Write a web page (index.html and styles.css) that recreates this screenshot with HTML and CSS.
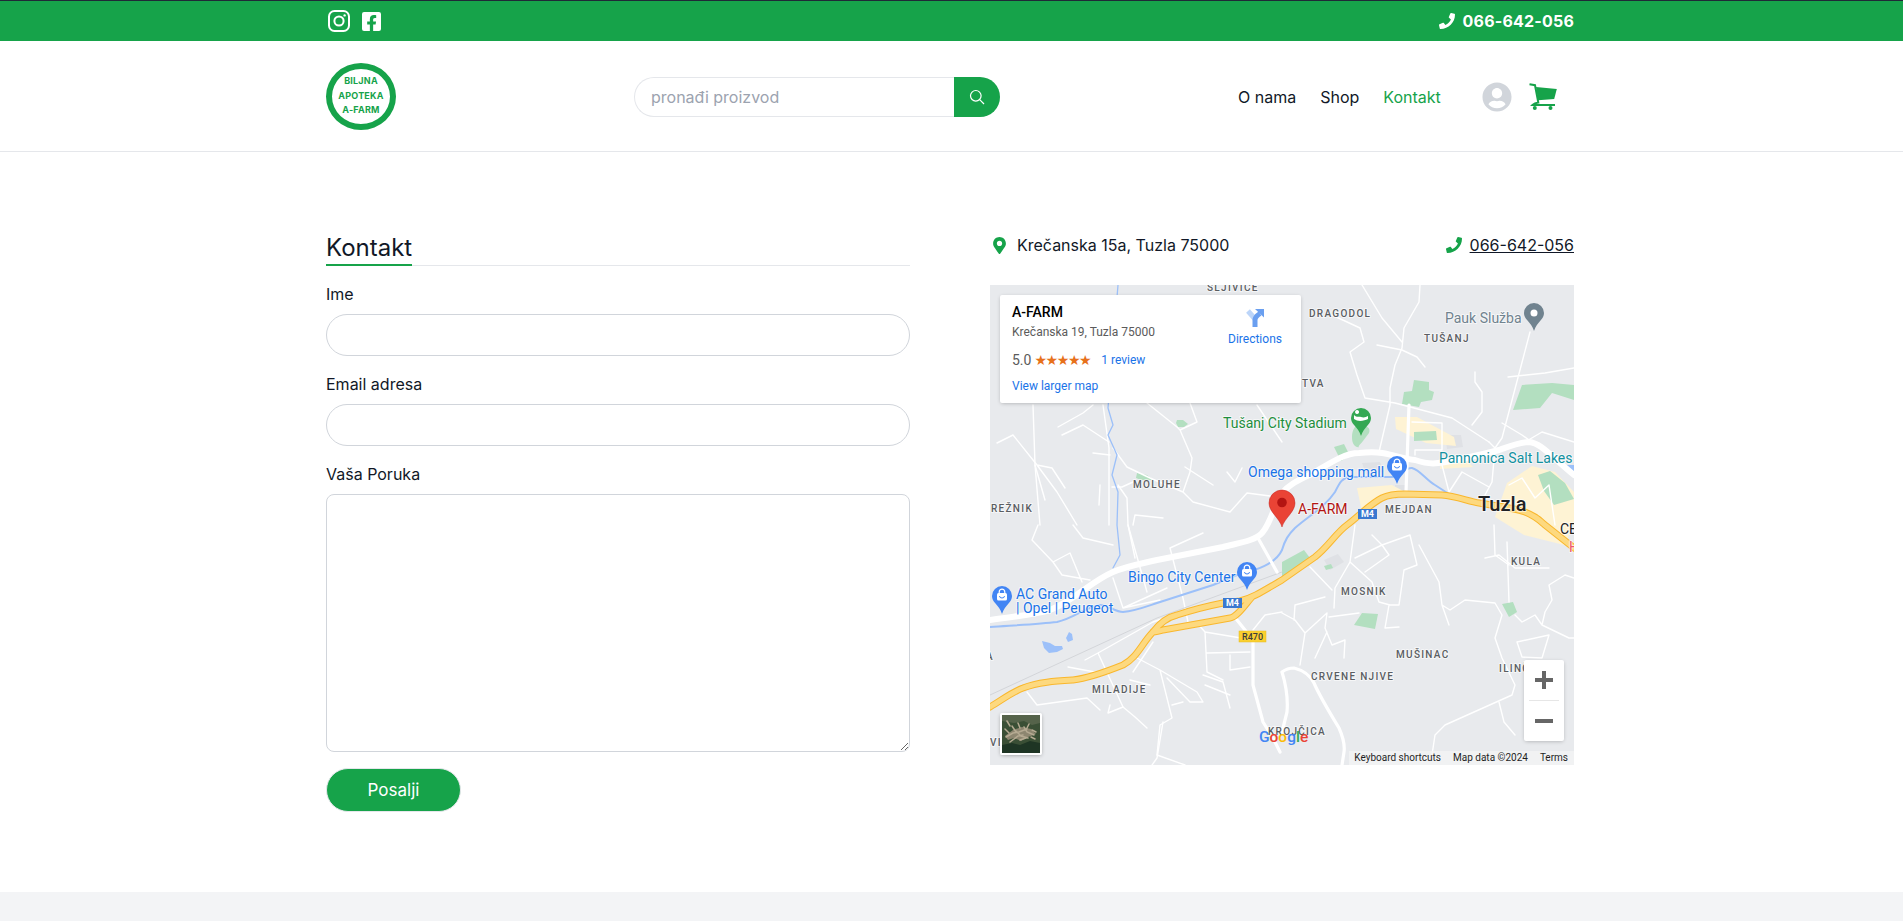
FILE: index.html
```html
<!DOCTYPE html>
<html lang="bs">

<head>
    <meta charset="UTF-8">
    <title>Kontakt - A-FARM</title>
    <link rel="stylesheet" href="styles.css">
</head>

<body>
    <!-- Gornja traka -->
    <div class="topbar">
        <div class="container topbar-inner">
            <div class="social">
                <a href="#" aria-label="Instagram">
                    <svg class="icon-instagram" viewBox="0 0 22 22" fill="none" stroke="#fff" stroke-width="2">
                        <rect x="1" y="1" width="20" height="20" rx="5.5"/>
                        <circle cx="11" cy="11" r="4.6"/>
                        <circle cx="16.6" cy="5.4" r="1.2" fill="#fff" stroke="none"/>
                    </svg>
                </a>
                <a href="#" aria-label="Facebook">
                    <svg class="icon-facebook" viewBox="0 32 448 448" fill="#fff">
                        <path d="M400 32H48A48 48 0 0 0 0 80v352a48 48 0 0 0 48 48h137.25V327.69h-63V256h63v-54.64c0-62.15 37-96.48 93.67-96.48 27.14 0 55.52 4.84 55.52 4.84v61h-31.27c-30.81 0-40.42 19.12-40.42 38.73V256h68.78l-11 71.69h-57.78V480H400a48 48 0 0 0 48-48V80a48 48 0 0 0-48-48z"/>
                    </svg>
                </a>
            </div>
            <a href="#" class="topbar-phone">
                <svg class="icon-phone" viewBox="0 0 512 512" fill="#fff">
                    <path d="M493.4 24.6l-104-24c-11.3-2.6-22.9 3.3-27.5 13.9l-48 112c-4.2 9.8-1.4 21.3 6.9 28l60.6 49.6c-36 76.7-98.9 140.5-177.2 177.2l-49.6-60.6c-6.8-8.3-18.2-11.1-28-6.9l-112 48C3.9 366.5-2 378.1.6 389.4l24 104C27.1 504.2 36.7 512 48 512c256.1 0 464-207.5 464-464 0-11.2-7.7-20.9-18.6-23.4z"/>
                </svg>
                066-642-056
            </a>
        </div>
    </div>

    <!-- Zaglavlje -->
    <header class="site-header">
        <div class="container header-inner">
            <a href="#" class="logo">
                <span>BILJNA</span>
                <span>APOTEKA</span>
                <span>A-FARM</span>
            </a>

            <form class="search">
                <input type="text" class="search-input" placeholder="pronađi proizvod">
                <button type="button" class="search-btn" aria-label="Pretraga">
                    <svg viewBox="0 0 16 16" fill="none" stroke="#fff" stroke-width="1.2">
                        <circle cx="6.8" cy="6.8" r="5.3"/>
                        <path d="M10.7 10.7L15 15"/>
                    </svg>
                </button>
            </form>

            <div class="header-right">
                <nav class="main-nav">
                    <a href="#">O nama</a>
                    <a href="#">Shop</a>
                    <a href="#" class="active">Kontakt</a>
                </nav>
                <svg class="icon-user" viewBox="0 0 496 512" fill="#d1d5db">
                    <path d="M248 8C111 8 0 119 0 256s111 248 248 248 248-111 248-248S385 8 248 8zm0 96c48.6 0 88 39.4 88 88s-39.4 88-88 88-88-39.4-88-88 39.4-88 88-88zm0 344c-58.7 0-111.3-26.6-146.5-68.2 18.8-35.4 55.6-59.8 98.5-59.8 2.4 0 4.8.4 7.1 1.1 13 4.2 26.6 6.9 40.9 6.9 14.3 0 28-2.7 40.9-6.9 2.3-.7 4.7-1.1 7.1-1.1 42.9 0 79.7 24.4 98.5 59.8C359.3 421.4 306.7 448 248 448z"/>
                </svg>
                <svg class="icon-cart" viewBox="0 0 28 27">
                    <path class="cart-line" d="M0.500 1.200L6 2.200 9.300 19.500C6.500 19.800 5 20.500 3.500 22H26"/>
                    <path class="cart-body" d="M7 4L27.800 6 25.200 16 9 17.200z"/>
                    <circle class="cart-body" cx="5.800" cy="25" r="2"/>
                    <circle class="cart-body" cx="21.500" cy="25" r="2"/>
                </svg>
            </div>
        </div>
    </header>

    <main class="container contact">
        <!-- Forma -->
        <section>
            <div class="section-title"><h2>Kontakt</h2></div>
            <form class="contact-form">
                <label for="ime">Ime</label>
                <input type="text" id="ime">
                <label for="email">Email adresa</label>
                <input type="email" id="email">
                <label for="poruka">Vaša Poruka</label>
                <textarea id="poruka"></textarea>
                <button type="button" class="send-btn">Posalji</button>
            </form>
        </section>

        <!-- Adresa i mapa -->
        <section>
            <div class="contact-info">
                <div class="info-item">
                    <svg class="icon-pin" viewBox="0 0 384 512" fill="#16a34a">
                        <path d="M172.268 501.67C26.97 291.031 0 268.413 0 192 0 85.961 85.961 0 192 0s192 85.961 192 192c0 76.413-26.97 99.031-172.268 309.67-9.535 13.774-29.93 13.773-39.464 0zM192 272c44.183 0 80-35.817 80-80s-35.817-80-80-80-80 35.817-80 80 35.817 80 80 80z"/>
                    </svg>
                    Krečanska 15a, Tuzla 75000
                </div>
                <div class="info-item">
                    <svg class="icon-phone" viewBox="0 0 512 512" fill="#16a34a">
                        <path d="M493.4 24.6l-104-24c-11.3-2.6-22.9 3.3-27.5 13.9l-48 112c-4.2 9.8-1.4 21.3 6.9 28l60.6 49.6c-36 76.7-98.9 140.5-177.2 177.2l-49.6-60.6c-6.8-8.3-18.2-11.1-28-6.9l-112 48C3.9 366.5-2 378.1.6 389.4l24 104C27.1 504.2 36.7 512 48 512c256.1 0 464-207.5 464-464 0-11.2-7.7-20.9-18.6-23.4z"/>
                    </svg>
                    <a href="#" class="info-phone">066-642-056</a>
                </div>
            </div>

            <div class="map">
                <svg class="map-canvas" viewBox="0 0 584 480">
                    <defs>
                        <path id="poi" d="M0 28c-1.5-5-4-7.500-6.500-10.500C-8.700 15-10 13-10 10a10 10 0 0 1 20 0c0 3-1.300 5-3.500 7.500C4 20.500 1.500 23 0 28z"/>
                        <g id="bag">
                            <rect x="-5" y="7" width="10" height="7.500" rx="1.500" fill="#fff"/>
                            <path d="M-2.800 7.500V6a2.800 2.800 0 0 1 5.600 0v1.500" fill="none" stroke="#fff" stroke-width="1.200"/>
                            <path d="M-2.500 10a2.500 2 0 0 0 5 0" fill="none" stroke="#4285f4" stroke-width="1"/>
                        </g>
                    </defs>

                    <!-- Povrsine -->
                    <g class="bldg">
                        <path d="M372 178l18-1 4 10-18 2z"/>
                        <path d="M405 200l12 0 0 12-12 2z"/>
                        <path d="M334 275l14-6 6 8-14 8z"/>
                        <path d="M455 150l16 0 2 12-16 2z"/>
                    </g>
                    <g class="beige">
                        <path d="M505 232l12-34 25-17 23 6 19 20v33l-10 20-40-10z"/>
                        <path d="M367 203l35-3 15 8-29 9-16 10z"/>
                        <path d="M405 132l22 0 37 20 2 9-30-3-30-14z"/>
                        <path d="M450 176l25-2 8 8-33 2z"/>
                    </g>
                    <g class="park">
                        <path d="M424 95l15 2 0 8 5 2-2 8-11 2-2 5-17-3 2-12 8-1z"/>
                        <path d="M532 100l30-2 22 2v15l-22-7-12 15-27 2z"/>
                        <path d="M187 135l6 0 5 4-4 3-6 0-2-4z"/>
                        <path d="M147 188l10 2 6 5-12 0-5-2z"/>
                        <path d="M369 140c8 0 12 3 10 8l-6 8c-4 5-6 6-3 6-6 1-8-4-8-10 0-5 2-12 7-12z"/>
                        <path d="M344 162l10-3 6 12-9 5z"/>
                        <path d="M424 147l22-1 1 9-23 1z"/>
                        <path d="M292 277l22-12 6 8-28 19z"/>
                        <path d="M364 340l8-12 16 1-3 15z"/>
                        <path d="M512 319l11-2 4 10-8 5z"/>
                        <path d="M334 281l7-2 2 4-7 2z"/>
                        <path d="M548 190l12-4 15 12 9 16-20 6-10-14z"/>
                    </g>
                    <path class="lake" d="M576 180l8 0 0 10-4-2z"/>

                    <!-- Sporedne ulice -->
                    <g class="road">
                        <path d="M7 158L23 150 47 180 67 207 87 240M47 180L62 183 75 203M113 120L119 163V240M128 200L137 213 138 240 145 273"/>
                        <path d="M123 163L137 182 160 193 193 207 203 217 240 227 257 208 280 211M190 145L202 173 200 187 193 207M157 118L187 142 190 145 207 137 200 118"/>
                        <path d="M68 142L93 128 103 120M72 150L93 140 119 157M43 120L45 180 50 240M237 187L245 197 252 183M195 182L223 200M122 202H132L143 197M143 240L145 230 173 233M110 200L109 220M103 168L120 170M267 120L292 157"/>
                        <path d="M430 0L429 17 414 43 412 63 405 80 400 103V120L389 167M342 30L370 43 374 57 360 67 367 90 375 113 405 118 462 133 499 157M372 0L392 33 412 57M387 60L412 65 427 72 435 82"/>
                        <path d="M540 47L512 153 505 163M485 87V97L492 107V127L482 140M518 92L555 88 584 83M535 157L552 147 584 157M499 157L505 163 502 197 495 210"/>
                        <path d="M422 137L452 138V165L425 165V170M452 180L459 207 472 187M472 187L499 202M519 200L532 193 545 213 559 200 565 240M512 138L532 150 560 170"/>
                        <path d="M42 255L48 240M42 255L63 277 80 268 92 297M63 277L72 290 100 295M83 240L93 253 123 260M123 293L133 323 170 315M138 240L157 307M133 323L177 303M180 263L193 313 198 337M180 263L213 248"/>
                        <path d="M108 368L163 337 183 330M95 375L108 368 133 422 145 432 157 443M78 382L110 388M147 373L170 385 207 407 213 417H200L177 393M163 357L143 387M170 385L182 433 170 440 167 470"/>
                        <path d="M37 407L47 420 97 413 110 425M118 428L133 422M118 428L120 420M215 347L217 387 233 395M207 338L215 347 263 355M217 368L260 367M240 370V385L260 382M213 390L233 397 240 423"/>
                        <path d="M263 345L275 330 292 327M420 250L427 280 414 285 409 320H399L395 343 409 342M365 240L360 277 345 303 344 323M360 277L382 297 389 317 400 320M365 273L392 260 420 250M382 250L392 260 399 270 375 287M320 282L342 305"/>
                        <path d="M292 328L305 335 315 348 310 380M305 320L335 312M305 320L304 335M315 348L337 328 335 343 342 360 355 355 354 373M339 332L369 328M325 373L337 347"/>
                        <path d="M429 260L449 297 452 320 459 340M452 320L460 325 475 315 505 318 512 330 505 353 512 373 525 400 522 410 455 440 445 450 442 470M517 257L519 317M495 273L509 270 525 283H559"/>
                        <path d="M525 330L532 337 545 330 552 340 579 353H584M552 340L555 327 562 315 559 300 575 290 584 293M527 357L559 350 552 373 532 372zM509 417L514 437 525 450M504 240L505 270 519 280"/>
                        <path d="M155 490L167 473 173 437M45 180L55 215M167 470L195 480M140 395L160 400M182 420L193 417M215 400L240 410"/>
                    </g>

                    <!-- Rijeke i zeljeznica -->
                    <path class="rail" d="M0 410L167 333 292 287"/>
                    <path class="river thin" d="M128 0L118 123 123 140 118 150 127 170 122 190 128 207 127 240 130 270 123 283"/>
                    <path class="river" d="M0 342C30 340 50 339 67 337 85 333 95 322 110 320 118 320 125 327 133 327 145 326 155 322 167 318L223 300 247 290C265 285 285 280 292 265 295 255 298 250 305 243 320 230 335 222 345 207 350 197 352 193 360 192L402 192C410 191 416 182 422 183 430 185 436 195 445 200L465 213"/>
                    <path class="lake" d="M52 356l8 2 5 3 7 0 1 3-6 3-8 1-5-5zM76 353l3-6 3 2 1 6-5 2z"/>

                    <!-- Glavne ceste -->
                    <path class="road-mid" d="M268 253L287 287M243 330L263 355V400L273 437 283 453 290 467M419 120L416 207M292 387C296 384 300 383 304 383 312 385 320 390 324 398 330 412 340 428 349 443 353 452 355 460 354 467L352 480M292 387C296 400 298 415 297 427L292 447"/>
                    <path class="road-major" d="M0 335C25 331 45 330 60 325 85 315 100 297 123 287 137 281 150 279 167 275L233 262C248 258 265 256 272 248 282 236 283 222 292 208 300 198 312 194 325 187 340 178 355 168 369 168 378 167 386 167 392 168 405 170 414 174 425 175 434 178 442 179 448 178 470 175 490 170 509 165 520 161 530 157 539 157 550 158 558 168 584 190"/>
                    <g class="highway">
                        <path class="hw-out" d="M0 422C12 415 22 407 33 403 48 397 66 396 83 395 100 393 118 386 133 380 147 373 152 358 163 347 170 338 178 332 187 330 202 325 218 321 233 318L250 316C262 313 270 308 292 295L325 272C338 262 346 248 357 240 368 232 380 219 392 213 400 209 408 209 415 209L452 210C465 211 478 216 489 218 505 221 522 222 535 227 545 231 548 234 555 240L584 263M163 347C168 346 170 346 173 345L240 333C247 332 255 320 262 312"/>
                        <path class="hw-in" d="M0 422C12 415 22 407 33 403 48 397 66 396 83 395 100 393 118 386 133 380 147 373 152 358 163 347 170 338 178 332 187 330 202 325 218 321 233 318L250 316C262 313 270 308 292 295L325 272C338 262 346 248 357 240 368 232 380 219 392 213 400 209 408 209 415 209L452 210C465 211 478 216 489 218 505 221 522 222 535 227 545 231 548 234 555 240L584 263M163 347C168 346 170 346 173 345L240 333C247 332 255 320 262 312"/>
                    </g>

                    <!-- Oznake ceste -->
                    <rect class="shield-m" x="368" y="224" width="19" height="10"/>
                    <text class="shield-text" x="377.500" y="232.300">M4</text>
                    <rect class="shield-m" x="233" y="313" width="19" height="10"/>
                    <text class="shield-text" x="242.500" y="321.300">M4</text>
                    <rect class="shield-r" x="249" y="346" width="27" height="11"/>
                    <text class="shield-text dark" x="262.500" y="355">R470</text>

                    <!-- Mjesta -->
                    <g class="place">
                        <text x="217" y="6">SLJIVICE</text>
                        <text x="143" y="203">MOLUHE</text>
                        <text x="1" y="227">REŽNIK</text>
                        <text x="319" y="32">DRAGODOL</text>
                        <text x="434" y="57">TUŠANJ</text>
                        <text x="312" y="102">TVA</text>
                        <text x="395" y="228">MEJDAN</text>
                        <text x="102" y="408">MILADIJE</text>
                        <text x="351" y="310">MOSNIK</text>
                        <text x="521" y="280">KULA</text>
                        <text x="406" y="373">MUŠINAC</text>
                        <text x="509" y="387">ILINČ</text>
                        <text x="321" y="395">CRVENE NJIVE</text>
                        <text x="278" y="450">KROJČICA</text>
                        <text x="0" y="461">VI</text>
                        <text x="-4" y="375">A</text>
                    </g>

                    <!-- Tacke -->
                    <text class="poi-text shop" x="258" y="192">Omega shopping mall</text>
                    <text class="poi-text shop" x="138" y="297">Bingo City Center</text>
                    <text class="poi-text shop" x="26" y="314">AC Grand Auto</text>
                    <text class="poi-text shop" x="26" y="328">| Opel | Peugeot</text>
                    <text class="poi-text sport" x="233" y="143">Tušanj City Stadium</text>
                    <text class="poi-text lakes" x="449" y="178">Pannonica Salt Lakes</text>
                    <text class="poi-text service" x="455" y="38">Pauk Služba</text>
                    <text class="poi-text red" x="308" y="229">A-FARM</text>
                    <text class="city" x="488" y="226">Tuzla</text>
                    <text class="city small" x="570" y="249">CE</text>
                    <text class="poi-text hotel" x="579" y="267">H</text>

                    <use href="#poi" class="pin-blue" x="407" y="171"/>
                    <use href="#bag" x="407" y="171"/>
                    <use href="#poi" class="pin-blue" x="257" y="277"/>
                    <use href="#bag" x="257" y="277"/>
                    <use href="#poi" class="pin-blue" x="12" y="301"/>
                    <use href="#bag" x="12" y="301"/>
                    <use href="#poi" class="pin-green" x="371" y="123"/>
                    <path class="stadium" d="M364 130c3 3 5 1 7 2 3 1 5 0 7-1v3c-4 2-10 3-14 0zM367 129a2 2 0 1 1 .1 0z"/>
                    <use href="#poi" class="pin-gray" x="544" y="18"/>
                    <circle class="pin-hole" cx="544" cy="28" r="3.500"/>

                    <path class="marker" d="M292 242c-2.500-9-13-15-13-24a13 13 0 1 1 26 0c0 9-10.500 15-13 24z"/>
                    <circle class="marker-dot" cx="292" cy="217.500" r="4.800"/>

                    <text class="google" x="269" y="457"><tspan class="g-blue">G</tspan><tspan class="g-red">o</tspan><tspan class="g-yellow">o</tspan><tspan class="g-blue">g</tspan><tspan class="g-green">l</tspan><tspan class="g-red">e</tspan></text>
                </svg>

                <div class="place-card">
                    <div class="place-main">
                        <div class="place-name">A-FARM</div>
                        <div class="place-address">Krečanska 19, Tuzla 75000</div>
                        <div class="place-rating">
                            <span class="rating-num">5.0</span>
                            <span class="stars">★★★★★</span>
                            <a href="#" class="review-link">1 review</a>
                        </div>
                        <a href="#" class="larger-link">View larger map</a>
                    </div>
                    <a href="#" class="directions">
                        <svg viewBox="0 0 18 18" fill="none" stroke-width="5">
                            <path d="M2 2L9 10" stroke="#bcd5f9"/>
                            <path d="M9 18V11C9 8.500 11 6.500 14 4.500" stroke="#6a9ff0"/>
                            <path d="M9 0H18V8.500z" fill="#6a9ff0" stroke="none"/>
                        </svg>
                        Directions
                    </a>
                </div>

                <div class="layer-thumb">
                    <svg viewBox="0 0 38 38">
                        <rect width="38" height="38" fill="#3a4f35"/>
                        <path d="M0 0h38v8l-8 2-8-4-10 2-12-2z" fill="#55634a"/>
                        <path d="M3 21l8-6 9-3 9 2 5 5-8 3-7 4-7-3-6 2z" fill="#8d8670"/>
                        <path d="M0 30l10-2 8 2 10-4 10 2v10H0z" fill="#1e3524"/>
                        <g fill="none" stroke="#b5aa92" stroke-linecap="round" stroke-width="1.500">
                            <path d="M4 22l7-4 6-1 8-3M8 27l8-6 5-1M14 16l5 5 7 2M22 12l3 5 7 3M10 11l4 6M27 9l-3 6"/>
                            <path d="M3 14l4 4M18 25l6-2M30 15l4 2M16 8l2 5M33 24l-4-2M5 6l3 5"/>
                        </g>
                    </svg>
                </div>

                <div class="zoom-ctrl">
                    <button type="button" class="zoom-btn" aria-label="Zoom in"><span class="bar"></span><span class="bar vert"></span></button>
                    <div class="zoom-sep"></div>
                    <button type="button" class="zoom-btn" aria-label="Zoom out"><span class="bar"></span></button>
                </div>

                <div class="attribution">
                    <span>Keyboard shortcuts</span>
                    <span>Map data ©2024</span>
                    <span>Terms</span>
                </div>
            </div>
        </section>
    </main>

    <footer class="site-footer"></footer>
</body>

</html>
```

FILE: styles.css
```css
* {
    box-sizing: border-box;
}

body {
    margin: 0;
    font-family: Inter, "Liberation Sans", sans-serif;
    font-size: 16px;
    line-height: 24px;
    color: #111827;
    background-color: #fff;
}

a {
    color: inherit;
    text-decoration: none;
}

.container {
    width: 1248px;
    margin-left: 326px;
}

/* Gornja traka */
.topbar {
    height: 41px;
    background-color: #16a34a;
    border-top: 1px solid #1f2937;
}

.topbar-inner {
    height: 40px;
    display: flex;
    align-items: center;
    justify-content: space-between;
}

.social {
    display: flex;
    align-items: center;
    gap: 12px;
    padding-left: 2px;
}

.social a {
    display: flex;
}

.icon-instagram {
    width: 22px;
    height: 22px;
}

.icon-facebook {
    width: 19px;
    height: 19px;
}

.icon-phone {
    width: 16px;
    height: 16px;
}

.topbar-phone {
    display: flex;
    align-items: center;
    gap: 8px;
    color: #fff;
    font-weight: 700;
    letter-spacing: 0.2px;
}

/* Zaglavlje */
.site-header {
    height: 111px;
    border-bottom: 1px solid #e5e7eb;
}

.header-inner {
    height: 110px;
    display: flex;
    align-items: center;
    justify-content: space-between;
    padding-right: 17px;
}

.logo {
    width: 70px;
    height: 67px;
    border: 6px solid #16a34a;
    border-radius: 50%;
    display: flex;
    flex-direction: column;
    align-items: center;
    justify-content: center;
    color: #16a34a;
    font-size: 9px;
    font-weight: 700;
    letter-spacing: 0.2px;
    line-height: 14.5px;
}

.search {
    display: flex;
    width: 366px;
    height: 40px;
    margin-top: 2px;
}

.search-input {
    flex: 1;
    min-width: 0;
    border: 1px solid #e5e7eb;
    border-right: 0;
    border-radius: 20px 0 0 20px;
    padding: 0 16px;
    font-family: Inter, sans-serif;
    font-size: 16px;
    outline: none;
}

.search-input::placeholder {
    color: #9ca3af;
}

.search-btn {
    width: 46px;
    border: 0;
    padding: 0;
    background-color: #16a34a;
    border-radius: 0 20px 20px 0;
    display: flex;
    align-items: center;
    justify-content: center;
}

.search-btn svg {
    width: 16px;
    height: 16px;
}

.header-right {
    display: flex;
    align-items: center;
    width: 319px;
    margin-top: 1px;
}

.main-nav {
    display: flex;
    gap: 24px;
}

.main-nav .active {
    color: #16a34a;
}

.icon-user {
    width: 30px;
    height: 30px;
    margin-left: 41px;
}

.icon-cart {
    width: 28px;
    height: 27px;
    margin-left: auto;
}

.cart-body {
    fill: #16a34a;
}

.cart-line {
    fill: none;
    stroke: #16a34a;
    stroke-width: 2;
}

/* Kontakt */
.contact {
    display: grid;
    grid-template-columns: 584px 584px;
    column-gap: 80px;
    padding: 81px 0 80px;
}

.section-title {
    border-bottom: 1px solid #e5e7eb;
    margin-top: -1px;
    margin-bottom: 16px;
}

.section-title h2 {
    display: inline-block;
    margin: 0 0 -1px;
    font-size: 24px;
    font-weight: 400;
    line-height: 32px;
    border-bottom: 2px solid #16a34a;
    vertical-align: top;
}

.contact-form label {
    display: block;
    margin-bottom: 8px;
}

.contact-form input,
.contact-form textarea {
    display: block;
    width: 100%;
    border: 1px solid #d1d5db;
    outline: none;
    background-color: #fff;
    margin-bottom: 16px;
}

.contact-form input {
    height: 42px;
    border-radius: 21px;
}

.contact-form textarea {
    height: 258px;
    border-radius: 8px;
}

.send-btn {
    display: block;
    width: 135px;
    height: 44px;
    border: 1px solid #e5e7eb;
    border-radius: 22px;
    background-color: #16a34a;
    color: #fff;
    font-family: Inter, sans-serif;
    font-size: 17px;
}

.contact-info {
    display: flex;
    justify-content: space-between;
    padding-left: 3px;
    margin-bottom: 28px;
}

.info-item {
    display: flex;
    align-items: center;
    gap: 8px;
}

.icon-pin {
    width: 13px;
    height: 17px;
    margin-right: 3px;
}

.info-phone {
    text-decoration: underline;
}

/* Mapa */
.map {
    position: relative;
    height: 480px;
    overflow: hidden;
    background-color: #e8eaed;
    font-family: Roboto, sans-serif;
}

.map-canvas {
    display: block;
    width: 584px;
    height: 480px;
}

.road,
.road-mid,
.road-major,
.river,
.rail,
.hw-out,
.hw-in {
    fill: none;
    stroke-linejoin: round;
    stroke-linecap: round;
}

.road {
    stroke: #fff;
    stroke-width: 1.4;
}

.road-mid {
    stroke: #fff;
    stroke-width: 3.2;
}

.road-major {
    stroke: #fff;
    stroke-width: 6;
}

.rail {
    stroke: #d3d5d9;
    stroke-width: 1;
}

.river {
    stroke: #9cc0f9;
    stroke-width: 2;
}

.river.thin {
    stroke-width: 1.3;
}

.lake {
    fill: #9cc0f9;
}

.bldg {
    fill: #dfe1e5;
}

.beige {
    fill: #fef3d4;
}

.park {
    fill: #b3dfc0;
}

.hw-out {
    stroke: #f9b72d;
    stroke-width: 7;
}

.hw-in {
    stroke: #fdd97f;
    stroke-width: 5;
}

.shield-m {
    fill: #3a78d0;
}

.shield-r {
    fill: #fad02f;
    stroke: #e5ba20;
    stroke-width: 0.5;
}

.shield-text {
    font-size: 9px;
    font-weight: 700;
    fill: #fff;
    text-anchor: middle;
}

.shield-text.dark {
    font-weight: 500;
    fill: #3c3c3c;
}

.place text,
.poi-text,
.city {
    paint-order: stroke;
    stroke: #fff;
    stroke-width: 2px;
    stroke-opacity: 0.6;
    stroke-linejoin: round;
}

.place text {
    font-size: 10px;
    font-weight: 500;
    letter-spacing: 1.3px;
    fill: #5a5d62;
}

.poi-text {
    font-size: 14px;
}

.shop {
    fill: #1a73e8;
}

.sport {
    fill: #1e8e3e;
}

.lakes {
    fill: #12909f;
}

.service {
    fill: #70838f;
}

.red {
    fill: #b31412;
}

.hotel {
    fill: #ee5a70;
}

.city {
    font-size: 20px;
    font-weight: 500;
    fill: #202124;
}

.city.small {
    font-size: 14px;
    font-weight: 400;
}

.pin-blue {
    fill: #4285f4;
}

.pin-green {
    fill: #34a853;
}

.pin-gray {
    fill: #70838f;
}

.pin-hole,
.stadium {
    fill: #fff;
}

.marker {
    fill: #ea4335;
    stroke: #c5221f;
    stroke-width: 0.5;
}

.marker-dot {
    fill: #b31412;
}

.google {
    font-size: 15.5px;
    font-weight: 500;
}

.g-blue {
    fill: #4285f4;
}

.g-red {
    fill: #ea4335;
}

.g-yellow {
    fill: #fbbc05;
}

.g-green {
    fill: #34a853;
}

.place-card {
    position: absolute;
    left: 10px;
    top: 10px;
    width: 301px;
    height: 108px;
    padding: 7px 12px;
    display: flex;
    justify-content: space-between;
    background-color: #fff;
    border-radius: 2px;
    box-shadow: 0 1px 4px -1px rgba(0, 0, 0, 0.3);
    font-size: 12px;
    line-height: 16px;
}

.place-name {
    font-size: 14px;
    font-weight: 500;
    line-height: 20px;
    color: #000;
}

.place-address {
    margin-top: 2px;
    color: #5b5b5b;
}

.place-rating {
    display: flex;
    align-items: center;
    margin-top: 10px;
    height: 20px;
    color: #5b5b5b;
}

.rating-num {
    font-size: 14px;
}

.stars {
    margin-left: 3px;
    font-family: "DejaVu Sans", sans-serif;
    font-size: 14px;
    letter-spacing: -1.4px;
    color: #e7711b;
    line-height: 1;
}

.review-link {
    margin-left: 11px;
    color: #1a73e8;
}

.larger-link {
    display: block;
    margin-top: 8px;
    color: #1a73e8;
}

.directions {
    width: 54px;
    margin-right: 7px;
    margin-top: 7px;
    text-align: center;
    color: #1a73e8;
}

.directions svg {
    display: block;
    width: 18px;
    height: 18px;
    margin: 0 auto 4px;
}

.layer-thumb {
    position: absolute;
    left: 10px;
    top: 428px;
    width: 42px;
    height: 42px;
    border: 2px solid #fff;
    border-radius: 2px;
    box-shadow: 0 1px 4px -1px rgba(0, 0, 0, 0.4);
    overflow: hidden;
}

.layer-thumb svg {
    display: block;
    width: 38px;
    height: 38px;
}

.zoom-ctrl {
    position: absolute;
    left: 534px;
    top: 375px;
    width: 40px;
    height: 81px;
    background-color: #fff;
    border-radius: 2px;
    box-shadow: 0 1px 4px -1px rgba(0, 0, 0, 0.3);
}

.zoom-btn {
    position: relative;
    display: flex;
    align-items: center;
    justify-content: center;
    width: 40px;
    height: 40px;
    border: 0;
    padding: 0;
    background: none;
}

.zoom-sep {
    width: 30px;
    height: 1px;
    margin: 0 auto;
    background-color: #e6e6e6;
}

.bar {
    position: absolute;
    width: 18px;
    height: 4px;
    background-color: #666;
}

.bar.vert {
    width: 4px;
    height: 18px;
}

.attribution {
    position: absolute;
    right: 0;
    bottom: 0;
    width: 225px;
    height: 14px;
    display: flex;
    gap: 12px;
    justify-content: flex-end;
    padding-right: 6px;
    background-color: rgba(245, 245, 245, 0.7);
    font-size: 10px;
    line-height: 14px;
    color: #1f1f1f;
}

.site-footer {
    height: 29px;
    background-color: #f3f4f6;
}
```
